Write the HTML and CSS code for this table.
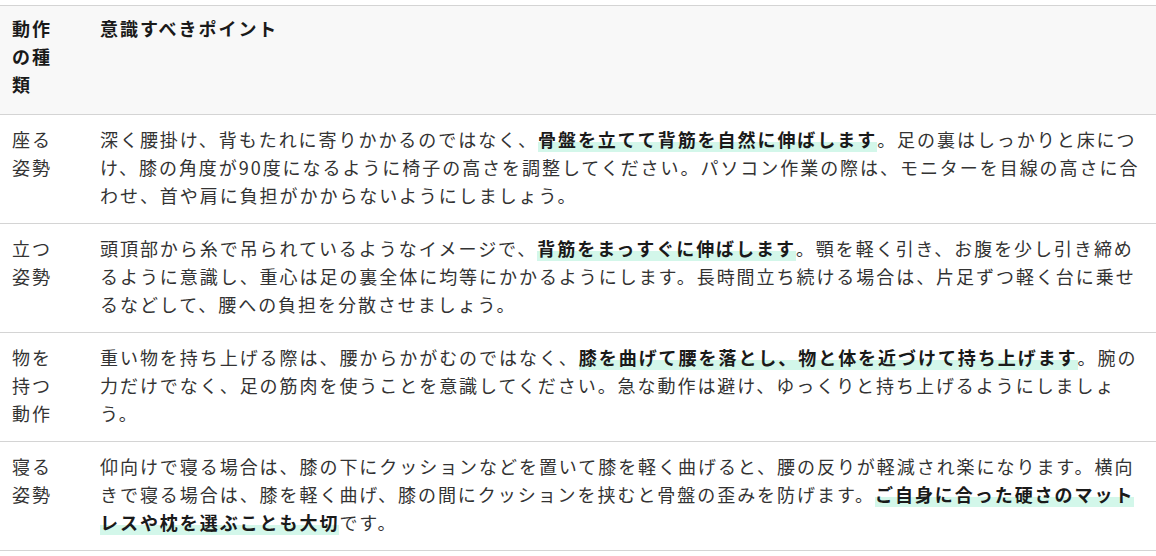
FILE: index.html
```html
<!DOCTYPE html>
<html lang="ja">
<head>
<meta charset="utf-8">
<title>動作の種類と意識すべきポイント</title>
<link rel="stylesheet" href="styles.css">
</head>
<body>
<div class="page">
  <table class="posture-table">
    <thead>
      <tr>
        <th class="col-type">動作の種類</th>
        <th class="col-point">意識すべきポイント</th>
      </tr>
    </thead>
    <tbody>
      <tr>
        <td class="col-type">座る姿勢</td>
        <td class="col-point">深く腰掛け、背もたれに寄りかかるのではなく、<strong class="mark">骨盤を立てて背筋を自然に伸ばします</strong>。足の裏はしっかりと床につけ、膝の角度が90度になるように椅子の高さを調整してください。パソコン作業の際は、モニターを目線の高さに合わせ、首や肩に負担がかからないようにしましょう。</td>
      </tr>
      <tr>
        <td class="col-type">立つ姿勢</td>
        <td class="col-point">頭頂部から糸で吊られているようなイメージで、<strong class="mark">背筋をまっすぐに伸ばします</strong>。顎を軽く引き、お腹を少し引き締めるように意識し、重心は足の裏全体に均等にかかるようにします。長時間立ち続ける場合は、片足ずつ軽く台に乗せるなどして、腰への負担を分散させましょう。</td>
      </tr>
      <tr>
        <td class="col-type">物を持つ動作</td>
        <td class="col-point">重い物を持ち上げる際は、腰からかがむのではなく、<strong class="mark">膝を曲げて腰を落とし、物と体を近づけて持ち上げます</strong>。腕の力だけでなく、足の筋肉を使うことを意識してください。急な動作は避け、ゆっくりと持ち上げるようにしましょう。</td>
      </tr>
      <tr>
        <td class="col-type">寝る姿勢</td>
        <td class="col-point">仰向けで寝る場合は、膝の下にクッションなどを置いて膝を軽く曲げると、腰の反りが軽減され楽になります。横向きで寝る場合は、膝を軽く曲げ、膝の間にクッションを挟むと骨盤の歪みを防げます。<strong class="mark">ご自身に合った硬さのマットレスや枕を選ぶことも大切</strong>です。</td>
      </tr>
    </tbody>
  </table>
</div>
</body>
</html>
```

FILE: styles.css
```css
html, body {
  margin: 0;
  padding: 0;
  background: #ffffff;
}

.page {
  padding-top: 5px;
}

.posture-table {
  width: 100%;
  border-collapse: collapse;
  table-layout: fixed;
  font-family: "Noto Sans CJK JP", "Noto Sans", sans-serif;
  font-size: 18px;
  line-height: 28px;
  letter-spacing: 1.95px;
  color: #333333;
}

.posture-table th,
.posture-table td {
  text-align: left;
  vertical-align: top;
  padding: 10px 12px 14px;
  border-top: 1px solid #d4d4d4;
  border-bottom: 1px solid #d4d4d4;
}

.posture-table thead th {
  background: #f8f8f8;
  font-weight: 700;
  color: #1a1a1a;
  padding-top: 8px;
  padding-bottom: 16px;
}

.posture-table .col-type {
  width: 52px;
  padding-right: 24px;
}

.mark {
  font-weight: 700;
  color: #1a1a1a;
  background: linear-gradient(transparent 62%, #d3f7ea 62%);
}
```
